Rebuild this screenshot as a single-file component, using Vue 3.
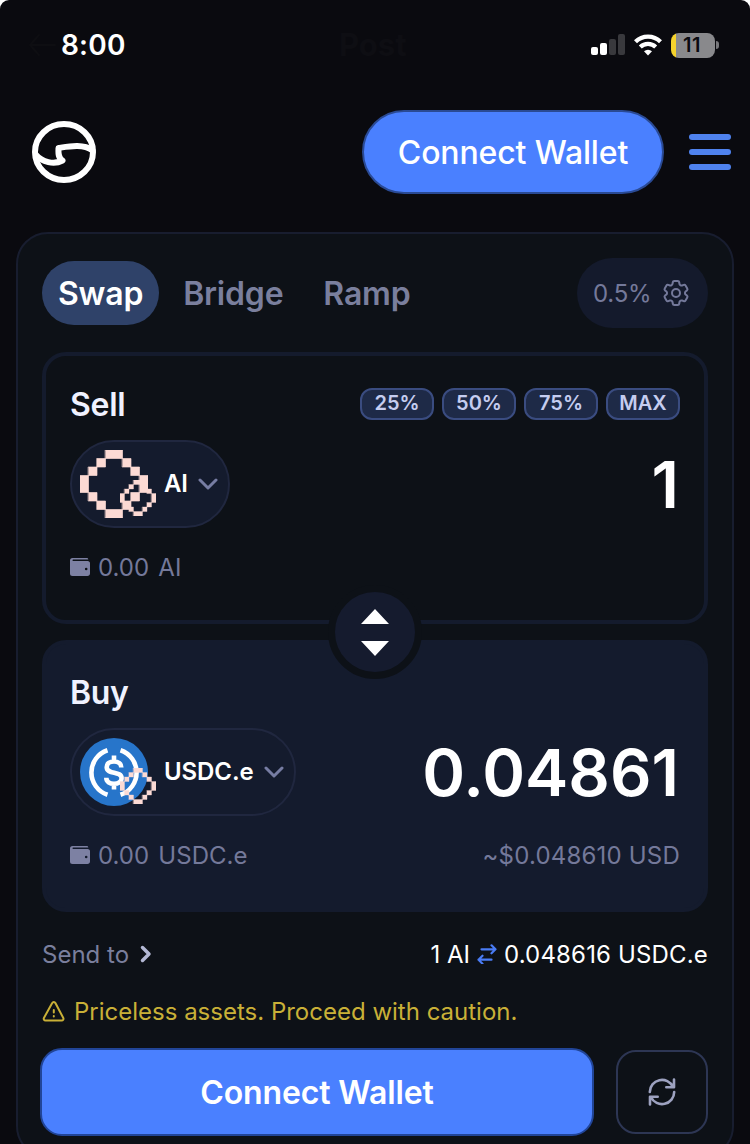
<template>
  <div class="screen">
    <div class="status-bar">
      <svg class="ghost-arrow" viewBox="0 0 28 24"><path d="M27 12H2M11 2 2 12l9 10" /></svg>
      <span class="time">8:00</span>
      <span class="ghost-title">Post</span>
      <div class="status-icons">
        <svg class="signal" width="35" height="22" viewBox="0 0 35 22">
          <rect x="0" y="13" width="7" height="8" rx="2" fill="#fff" />
          <rect x="9" y="9" width="7" height="12" rx="2" fill="#fff" />
          <rect x="18" y="5" width="7" height="16" rx="2" fill="#39393d" />
          <rect x="27" y="0" width="7" height="21" rx="2" fill="#39393d" />
        </svg>
        <svg class="wifi" width="28" height="22" viewBox="0 0 28 22">
          <path d="M1.500 7.800a17.600 17.600 0 0 1 25 0" />
          <path d="M6.300 13a11 11 0 0 1 15.400 0" />
          <path class="wifi-dot" d="M10 17.200a6 6 0 0 1 8 0L14 21.500z" />
        </svg>
        <div class="battery"><span>11</span></div>
        <i class="battery-cap"></i>
      </div>
    </div>

    <header class="header">
      <svg class="logo" width="64" height="62" viewBox="0 0 64 62">
        <ellipse cx="32" cy="31" rx="29" ry="27.9" />
        <path d="M4 34c6 7 18 10 26.500 5.500C25.500 36.500 26.500 31 26.500 27c10-1.500 25-4.500 34 2.500" />
      </svg>
      <button class="wallet-btn">Connect Wallet</button>
      <button class="menu-btn"><i></i><i></i><i></i></button>
    </header>

    <main class="card">
      <div class="tabs">
        <button
          v-for="tab in tabs"
          :key="tab"
          class="tab"
          :class="{ active: tab === activeTab }"
          @click="activeTab = tab"
        >{{ tab }}</button>
        <button class="slippage">
          <span>0.5%</span>
          <svg width="32" height="32" viewBox="0 0 24 24">
            <path d="M9.594 3.94c.09-.542.56-.94 1.11-.94h2.593c.55 0 1.02.398 1.11.94l.213 1.281c.063.374.313.686.645.87.074.04.147.083.22.127.325.196.72.257 1.075.124l1.217-.456a1.125 1.125 0 0 1 1.37.49l1.296 2.247a1.125 1.125 0 0 1-.26 1.431l-1.003.827c-.293.241-.438.613-.43.992a7.723 7.723 0 0 1 0 .255c-.008.378.137.75.43.991l1.004.827c.424.35.534.955.26 1.43l-1.298 2.247a1.125 1.125 0 0 1-1.369.491l-1.217-.456c-.355-.133-.75-.072-1.076.124a6.47 6.47 0 0 1-.22.128c-.331.183-.581.495-.644.869l-.213 1.281c-.09.543-.56.94-1.11.94h-2.594c-.55 0-1.019-.398-1.11-.94l-.213-1.281c-.062-.374-.312-.686-.644-.87a6.52 6.52 0 0 1-.22-.127c-.325-.196-.72-.257-1.076-.124l-1.217.456a1.125 1.125 0 0 1-1.369-.49l-1.297-2.247a1.125 1.125 0 0 1 .26-1.431l1.004-.827c.292-.24.437-.613.43-.991a6.932 6.932 0 0 1 0-.255c.007-.38-.138-.751-.43-.992l-1.004-.827a1.125 1.125 0 0 1-.26-1.43l1.297-2.247a1.125 1.125 0 0 1 1.37-.491l1.216.456c.356.133.751.072 1.076-.124.072-.044.146-.086.22-.128.332-.183.582-.495.644-.869l.214-1.28Z" />
            <circle cx="12" cy="12" r="3" />
          </svg>
        </button>
      </div>

      <div class="panels">
        <section v-for="side in sides" :key="side.label" class="panel" :class="side.kind">
          <div class="panel-head">
            <h2>{{ side.label }}</h2>
            <div v-if="side.kind === 'sell'" class="presets">
              <button v-for="p in presets" :key="p">{{ p }}</button>
            </div>
          </div>
          <div class="panel-main">
            <button class="token">
              <span class="token-icon">
                <svg v-if="side.kind === 'sell'" class="coin" viewBox="0 0 8 8">
                  <path class="pixels" :d="diamond" />
                </svg>
                <svg v-else class="coin" viewBox="0 0 68 68">
                  <circle cx="34" cy="34" r="34" fill="#2775ca" />
                  <path class="usdc-line" d="M27.500 12.200a23.500 23.500 0 0 0 0 44.600M40.500 12.200a23.500 23.500 0 0 1 0 44.600" />
                  <path class="usdc-line" d="M34 17.500v6M34 45.500v6M41.300 29.500c0-4-3-6-7.300-6s-7.300 2-7.300 5.700c0 7.800 14.900 3.300 14.900 10.900 0 3.700-3.300 5.700-7.600 5.700s-7.700-2-7.700-6" />
                </svg>
                <svg class="chain" viewBox="0 0 8 8">
                  <path class="pixels" :d="diamond" />
                </svg>
              </span>
              <span class="token-name">{{ side.token }}</span>
              <svg class="chevron" width="20" height="12" viewBox="0 0 20 12"><path d="m2 2 8 8 8-8" /></svg>
            </button>
            <span class="amount">{{ side.amount }}</span>
          </div>
          <div class="panel-foot">
            <svg class="wallet" width="20" height="18" viewBox="0 0 20 18">
              <path
                fill-rule="evenodd"
                d="M2.500 0h14.300c.9 0 1.500.6 1.500 1.500H3.200a.7.7 0 0 0 0 1.500h14.500C19 3 20 4 20 5.200v10.300c0 1.400-1.100 2.500-2.500 2.500h-15A2.500 2.500 0 0 1 0 15.500v-13A2.500 2.500 0 0 1 2.500 0m13.700 9.700a1.300 1.300 0 1 0 0 2.600 1.300 1.300 0 0 0 0-2.600"
              />
            </svg>
            <span class="balance">0.00 {{ side.token }}</span>
            <span class="fiat">{{ side.fiat }}</span>
          </div>
        </section>
        <button class="flip">
          <svg width="28" height="47" viewBox="0 0 28 47"><path d="M0 15 14 0l14 15zM0 32h28L14 47z" /></svg>
        </button>
      </div>

      <div class="info">
        <span class="send-to">Send to</span>
        <svg class="send-arrow" width="12" height="18" viewBox="0 0 12 18"><path d="m2.500 2.500 6.500 6.500-6.500 6.500" /></svg>
        <span class="rate">
          <span>1 AI</span>
          <svg width="20" height="20" viewBox="0 0 20 20"><path d="M4.500 5.300h13.700M14.500 1.300l4 4-4 4M14.500 15.700H1.500M5.500 11.700l-4 4 4 4" /></svg>
          <span class="rate-value">0.048616 USDC.e</span>
        </span>
      </div>

      <div class="warning">
        <svg width="24" height="22" viewBox="0 0 24 22">
          <path d="M10.200 3a1.800 1.800 0 0 1 3.200 0l7.900 15a1.800 1.800 0 0 1-1.600 2.600H3.500A1.800 1.800 0 0 1 1.900 18zM11.800 10v2.500M11.800 16v.6" />
        </svg>
        <span>Priceless assets. Proceed with caution.</span>
      </div>

      <div class="actions">
        <button class="connect">Connect Wallet</button>
        <button class="refresh">
          <svg width="28" height="28" viewBox="0 0 28 28">
            <path d="M1.800 14a12.200 12.200 0 0 1 23.200-5.200M26 1.500v7.700h-7.700M26.200 14A12.200 12.200 0 0 1 3 19.200M2 26.500v-7.700h7.700" />
          </svg>
        </button>
      </div>
    </main>
  </div>
</template>

<script setup>
import { ref } from 'vue'

const tabs = ['Swap', 'Bridge', 'Ramp']
const activeTab = ref('Swap')
const presets = ['25%', '50%', '75%', 'MAX']

const sides = ref([
  { kind: 'sell', label: 'Sell', token: 'AI', amount: '1', fiat: '' },
  { kind: 'buy', label: 'Buy', token: 'USDC.e', amount: '0.04861', fiat: '~$0.048610 USD' }
])

// pixel diamond on an 8x8 grid
const diamond = [
  [3, 0, 2, 1], [2, 1, 1, 1], [5, 1, 1, 1], [1, 2, 1, 1], [6, 2, 1, 1],
  [0, 3, 1, 2], [7, 3, 1, 2], [1, 5, 1, 1], [6, 5, 1, 1], [2, 6, 1, 1],
  [5, 6, 1, 1], [3, 7, 2, 1]
].map(([x, y, w, h]) => `M${x} ${y}h${w}v${h}h-${w}z`).join('')
</script>

<style>
body {
  margin: 0;
  background: #fff;
}
</style>

<style scoped>
* {
  box-sizing: border-box;
}

.screen {
  height: 1144px;
  overflow: hidden;
  border-radius: 9px 9px 0 0;
  background: #0a0a0f;
  color: #fff;
  font-family: Inter, "Liberation Sans", sans-serif;
}

button {
  padding: 0;
  border: 0;
  background: none;
  color: inherit;
  font: inherit;
}

svg {
  display: block;
  flex: none;
  fill: none;
  stroke-linecap: round;
  stroke-linejoin: round;
}

.status-bar {
  position: relative;
  display: flex;
  align-items: center;
  height: 90px;
  padding: 0 31px 0 61px;
}

.ghost-arrow {
  position: absolute;
  left: 28px;
  top: 33px;
  width: 28px;
  height: 24px;
  stroke: #0e0e12;
  stroke-width: 2;
}

.time {
  font-size: 28px;
  font-weight: 600;
  letter-spacing: 0.2px;
}

.ghost-title {
  position: absolute;
  left: 339px;
  top: 26px;
  color: #0e0e13;
  font-size: 31px;
  font-weight: 700;
}

.status-icons {
  display: flex;
  align-items: center;
  margin-left: auto;
}

.signal {
  margin-right: 8px;
}

.wifi {
  margin-right: 9px;
  stroke: #fff;
  stroke-width: 4.200;
  stroke-linecap: butt;
}

.wifi .wifi-dot {
  fill: #fff;
  stroke: none;
}

.battery {
  width: 44px;
  height: 25px;
  padding-right: 2px;
  border-radius: 8px;
  background: linear-gradient(90deg, #f6d32d 5px, #89898c 5px);
  color: #0a0a0f;
  font-size: 20px;
  font-weight: 600;
  letter-spacing: 0.6px;
  line-height: 25px;
  text-align: center;
}

.battery-cap {
  width: 3px;
  height: 8px;
  margin-left: 1px;
  border-radius: 0 4px 4px 0;
  background: #77777b;
}

.header {
  display: flex;
  align-items: center;
  height: 84px;
  margin: 20px 19px 38px 32px;
}

.logo {
  stroke: #fff;
  stroke-width: 6;
}

.wallet-btn {
  width: 302px;
  height: 84px;
  margin-left: auto;
  border: 2px solid #2a4a94;
  border-radius: 42px;
  background: #4a80ff;
  font-size: 32px;
  font-weight: 500;
  letter-spacing: -0.15px;
}

.menu-btn {
  display: grid;
  gap: 9px;
  width: 42px;
  margin-left: 25px;
}

.menu-btn i {
  height: 6px;
  border-radius: 3px;
  background: #4f82ee;
}

.card {
  height: 926px;
  margin: 0 16px;
  padding: 24px;
  border: 2px solid #181d2f;
  border-radius: 32px;
  background: #0d1117;
}

.tabs {
  display: flex;
  align-items: center;
  height: 70px;
}

.tab {
  height: 64px;
  margin-right: 8px;
  padding: 0 16px;
  border-radius: 32px;
  color: #7a7f9d;
  font-size: 32px;
  font-weight: 600;
  letter-spacing: -0.2px;
}

.tab.active {
  background: #2f4269;
  color: #fff;
}

.slippage {
  display: flex;
  align-items: center;
  gap: 9px;
  width: 131px;
  height: 70px;
  margin-left: auto;
  padding-left: 16px;
  border-radius: 35px;
  background: #141a2c;
  color: #74799a;
  font-size: 24px;
  letter-spacing: -0.2px;
}

.slippage svg {
  stroke: currentColor;
  stroke-width: 1.5;
}

.panels {
  position: relative;
  display: grid;
  gap: 16px;
  margin-top: 24px;
}

.panel {
  height: 272px;
  padding: 28px 24px;
  border: 4px solid #141b2d;
  border-radius: 24px;
}

.panel.buy {
  background: #141b2d;
}

.panel-head,
.panel-main,
.panel-foot {
  display: flex;
  align-items: center;
}

.panel-head {
  justify-content: space-between;
  height: 40px;
}

h2 {
  margin: 0;
  color: #f0f2ff;
  font-size: 32px;
  font-weight: 600;
  letter-spacing: -0.3px;
}

.presets {
  display: flex;
  gap: 8px;
}

.presets button {
  width: 74px;
  height: 32px;
  padding-bottom: 1px;
  border: 2px solid #3a4c80;
  border-radius: 12px;
  background: #1e2a47;
  color: #c5cdf0;
  font-size: 20px;
  font-weight: 600;
  line-height: 27px;
}

.panel-main {
  justify-content: space-between;
  height: 88px;
  margin-top: 16px;
}

.token {
  display: flex;
  align-items: center;
  height: 88px;
  padding: 0 10px 0 8px;
  border: 2px solid #20273f;
  border-radius: 44px;
  background: #141b2d;
}

.token-icon {
  position: relative;
  width: 68px;
  height: 68px;
}

.coin {
  width: 68px;
  height: 68px;
}

.chain {
  position: absolute;
  left: 40px;
  top: 30px;
  width: 36px;
  height: 36px;
}

.pixels {
  fill: #fcdad4;
  stroke: #fcdad4;
  stroke-width: 0.080;
  stroke-linejoin: miter;
}

.usdc-line {
  stroke: #fff;
  stroke-width: 4.600;
  stroke-linecap: butt;
}

.token-name {
  margin: 0 10px 0 16px;
  padding-bottom: 2px;
  font-size: 24px;
  font-weight: 600;
  letter-spacing: -0.1px;
}

.chevron {
  stroke: #777da3;
  stroke-width: 3;
}

.amount {
  padding-right: 1px;
  font-size: 65px;
  font-weight: 600;
}

.panel-foot {
  height: 40px;
  margin-top: 19px;
  color: #74799a;
  font-size: 24px;
}

.wallet {
  margin-right: 8px;
  fill: #7d81a3;
}

.balance {
  word-spacing: 2.500px;
}

.fiat {
  margin-left: auto;
  letter-spacing: 0.2px;
}

.flip {
  position: absolute;
  left: 50%;
  top: 50%;
  display: grid;
  place-items: center;
  width: 94px;
  height: 94px;
  border: 7px solid #0d1117;
  border-radius: 50%;
  background: #151b2e;
  transform: translate(-50%, -50%);
}

.flip svg {
  fill: #fff;
}

.info {
  display: flex;
  align-items: center;
  height: 40px;
  margin-top: 22px;
  font-size: 24px;
}

.send-to {
  color: #7a7f9d;
}

.send-arrow {
  margin-left: 11px;
  stroke: #b3b8d4;
  stroke-width: 3.500;
}

.rate {
  display: flex;
  align-items: center;
  gap: 7px;
  margin-left: auto;
}

.rate svg {
  stroke: #4a7cf5;
  stroke-width: 2.200;
}

.rate-value {
  letter-spacing: 0.160px;
}

.warning {
  display: flex;
  align-items: center;
  gap: 8px;
  height: 40px;
  margin-top: 17px;
  color: #c9b037;
  font-size: 24px;
}

.warning svg {
  stroke: currentColor;
  stroke-width: 2;
}

.actions {
  display: flex;
  align-items: center;
  justify-content: space-between;
  margin: 17px 0 0 -2px;
}

.connect {
  width: 554px;
  height: 88px;
  border: 2px solid #214598;
  border-radius: 22px;
  background: #4a80ff;
  font-size: 32px;
  font-weight: 600;
  letter-spacing: -0.15px;
}

.refresh {
  display: grid;
  place-items: center;
  width: 92px;
  height: 84px;
  border: 2px solid #2d3654;
  border-radius: 20px;
}

.refresh svg {
  stroke: #9da2c0;
  stroke-width: 2.600;
}
</style>
